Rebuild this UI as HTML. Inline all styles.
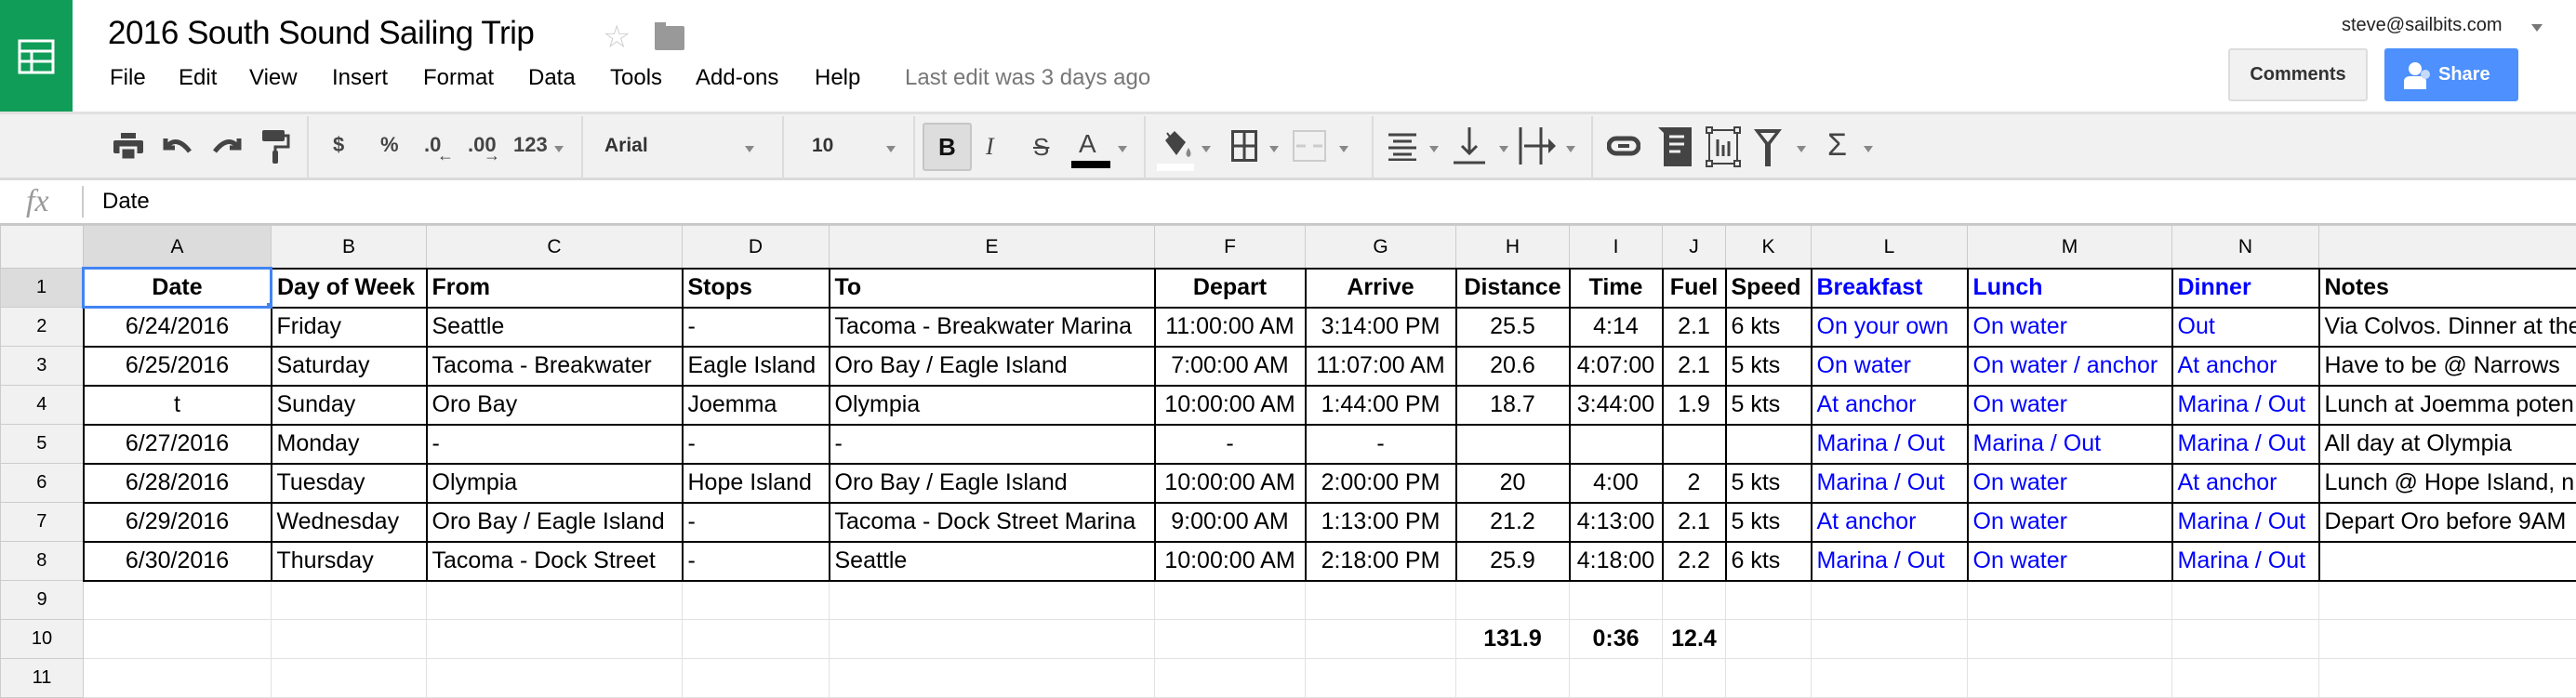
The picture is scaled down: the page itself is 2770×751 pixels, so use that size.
<!DOCTYPE html>
<html><head><meta charset="utf-8"><style>
*{margin:0;padding:0;box-sizing:border-box}
body{width:2770px;height:750px;overflow:hidden;background:#fff;font-family:"Liberation Sans",Arial,sans-serif;position:relative}
.a{position:absolute;white-space:nowrap}
.menu span{position:absolute;top:70px;font-size:24px;color:#000}
.tb{position:absolute;left:0;top:120px;width:2770px;height:74px;background:#f1f1f1;border-top:3px solid #e0e0e0;border-bottom:3px solid #dadada}
.sep{position:absolute;top:2px;width:2px;height:68px;background:#dcdcdc}
.ic{position:absolute;color:#444;font-weight:bold;font-size:22px}
.dd{position:absolute;top:34px;width:0;height:0;border-left:5px solid transparent;border-right:5px solid transparent;border-top:7px solid #888}
table{position:absolute;left:0;top:242px;border-collapse:collapse;table-layout:fixed;font-size:25px;width:2776px}
td{height:42px;padding:0 5px;overflow:hidden;white-space:nowrap;border:1px solid #e2e2e2;vertical-align:middle;line-height:25px}
tr.h td{height:46px;background:#f1f1f1;border:1px solid #ccc;text-align:center;font-size:21px}
td.rh{background:#f1f1f1;border:1px solid #ccc;text-align:center;font-size:20px;padding:0}
.k td:not(.rh){border:2px solid #000}
.b{font-weight:bold}.c{text-align:center}.u{color:#0000ff}
</style></head><body>
<div class="a" style="left:0;top:0;width:78px;height:120px;background:#0f9d58"></div>
<svg class="a" style="left:19px;top:42px" width="40" height="38" viewBox="0 0 40 38"><rect x="2" y="2" width="36" height="34" fill="none" stroke="#fff" stroke-width="3"/><line x1="2" y1="13" x2="38" y2="13" stroke="#fff" stroke-width="3"/><line x1="2" y1="24" x2="38" y2="24" stroke="#fff" stroke-width="3"/><line x1="15" y1="13" x2="15" y2="36" stroke="#fff" stroke-width="3"/></svg>
<div class="a" style="left:116px;top:16px;font-size:35px;color:#000;letter-spacing:-0.5px">2016 South Sound Sailing Trip</div>
<div class="a" style="left:648px;top:20px;font-size:34px;color:#ccc">☆</div>
<div class="a" style="left:704px;top:28px;width:32px;height:26px;background:#999;border-radius:2px"></div>
<div class="a" style="left:704px;top:24px;width:12px;height:6px;background:#999"></div>
<div class="menu"><span style="left:118px">File</span><span style="left:192px">Edit</span><span style="left:268px">View</span><span style="left:357px">Insert</span><span style="left:455px">Format</span><span style="left:568px">Data</span><span style="left:656px">Tools</span><span style="left:748px">Add-ons</span><span style="left:876px">Help</span><span style="left:973px;color:#777">Last edit was 3 days ago</span></div>
<div class="a" style="left:2518px;top:16px;font-size:20px;color:#222">steve@sailbits.com</div>
<div class="a" style="left:2722px;top:26px;border-left:6px solid transparent;border-right:6px solid transparent;border-top:8px solid #777"></div>
<div class="a" style="left:2396px;top:52px;width:150px;height:57px;background:#f1f1f1;border:2px solid #ddd;border-radius:3px;font-size:20px;font-weight:bold;color:#333;text-align:center;line-height:53px">Comments</div>
<div class="a" style="left:2564px;top:52px;width:144px;height:57px;background:#4d90fe;border-radius:3px;font-size:20px;font-weight:bold;color:#fff;line-height:57px;padding-left:58px">Share</div>
<svg class="a" style="left:2584px;top:66px" width="34" height="30"><circle cx="13" cy="8" r="7" fill="#fff"/><path d="M1 30 V22 Q1 16 8 16 H18 Q25 16 25 22 V30Z" fill="#fff"/><circle cx="24" cy="14" r="5" fill="#c6dafc"/></svg>

<div class="tb">
<div class="sep" style="left:330px"></div><div class="sep" style="left:625px"></div><div class="sep" style="left:841px"></div><div class="sep" style="left:982px"></div><div class="sep" style="left:1230px"></div><div class="sep" style="left:1475px"></div><div class="sep" style="left:1711px"></div>
<svg class="a" style="left:122px;top:20px" width="32" height="30"><rect x="8" y="0" width="16" height="6" fill="#444"/><rect x="0" y="8" width="32" height="14" rx="2" fill="#444"/><rect x="8" y="16" width="16" height="13" fill="#444" stroke="#f1f1f1" stroke-width="3"/></svg>
<svg class="a" style="left:174px;top:22px" width="34" height="24"><path d="M4 4 V14 H14 M5 13 Q16 0 30 18" fill="none" stroke="#444" stroke-width="5"/></svg>
<svg class="a" style="left:227px;top:22px" width="34" height="24"><path d="M30 4 V14 H20 M29 13 Q18 0 4 18" fill="none" stroke="#444" stroke-width="5"/></svg>
<svg class="a" style="left:282px;top:17px" width="30" height="36"><rect x="0" y="0" width="24" height="12" rx="2" fill="#444"/><path d="M24 6 H28 V18 H14 V24" fill="none" stroke="#444" stroke-width="3"/><rect x="11" y="22" width="6" height="14" rx="2" fill="#444"/></svg>
<div class="ic" style="left:358px;top:20px">$</div>
<div class="ic" style="left:409px;top:20px">%</div>
<div class="ic" style="left:456px;top:20px">.0</div><div class="ic" style="left:470px;top:34px;font-size:18px">←</div>
<div class="ic" style="left:503px;top:20px">.00</div><div class="ic" style="left:520px;top:34px;font-size:18px">→</div>
<div class="ic" style="left:552px;top:20px">123</div><div class="dd" style="left:596px"></div>
<div class="ic" style="left:650px;top:22px;font-size:21px;color:#333">Arial</div><div class="dd" style="left:801px"></div>
<div class="ic" style="left:873px;top:22px;font-size:21px;color:#333">10</div><div class="dd" style="left:953px"></div>
<div class="a" style="left:992px;top:9px;width:53px;height:52px;background:#ddd;border:2px solid #c6c6c6;border-radius:3px"></div>
<div class="ic" style="left:1009px;top:20px;font-size:26px;color:#111">B</div>
<div class="ic" style="left:1060px;top:20px;font-size:26px;font-style:italic;font-family:'Liberation Serif',serif;font-weight:normal">I</div>
<div class="ic" style="left:1111px;top:20px;font-size:26px;text-decoration:line-through;font-weight:normal">S</div>
<div class="ic" style="left:1160px;top:16px;font-size:28px;font-weight:normal">A</div><div class="a" style="left:1152px;top:50px;width:42px;height:8px;background:#000"></div><div class="dd" style="left:1202px"></div>
<svg class="a" style="left:1245px;top:14px" width="40" height="42"><path d="M8 14 L18 4 L30 16 L20 30 Z" fill="#444"/><path d="M10 6 L20 20" stroke="#444" stroke-width="2"/><path d="M33 22 Q38 30 33 32 Q28 30 33 22" fill="#888"/></svg>
<div class="a" style="left:1244px;top:53px;width:40px;height:8px;background:#fff"></div><div class="dd" style="left:1292px"></div>
<svg class="a" style="left:1324px;top:17px" width="28" height="34"><rect x="1.5" y="1.5" width="25" height="31" fill="none" stroke="#444" stroke-width="3"/><line x1="14" y1="0" x2="14" y2="34" stroke="#444" stroke-width="3"/><line x1="0" y1="17" x2="28" y2="17" stroke="#444" stroke-width="3"/></svg><div class="dd" style="left:1365px"></div>
<svg class="a" style="left:1390px;top:17px" width="36" height="34"><rect x="1" y="1" width="34" height="32" fill="none" stroke="#ccc" stroke-width="2"/><path d="M4 17 H14 M32 17 H22" stroke="#ccc" stroke-width="3"/></svg><div class="dd" style="left:1440px"></div>
<svg class="a" style="left:1493px;top:20px" width="30" height="30"><path d="M0 2 H30 M5 9 H25 M0 16 H30 M5 23 H25 M0 29 H30" stroke="#444" stroke-width="3"/></svg><div class="dd" style="left:1537px"></div>
<svg class="a" style="left:1563px;top:14px" width="34" height="40"><path d="M17 0 V28 M9 20 L17 28 L25 20 M0 38 H34" fill="none" stroke="#444" stroke-width="3"/></svg><div class="dd" style="left:1612px"></div>
<svg class="a" style="left:1633px;top:14px" width="42" height="40"><path d="M2 0 V40 M24 0 V40 M6 20 H36" stroke="#444" stroke-width="3"/><path d="M32 12 L40 20 L32 28Z" fill="#444"/></svg><div class="dd" style="left:1684px"></div>
<svg class="a" style="left:1728px;top:23px" width="36" height="22"><rect x="2" y="3" width="32" height="16" rx="8" fill="none" stroke="#444" stroke-width="5"/><line x1="12" y1="11" x2="24" y2="11" stroke="#444" stroke-width="4"/></svg>
<svg class="a" style="left:1783px;top:14px" width="36" height="42"><path d="M0 0 H36 V42 H6 V6Z" fill="#444"/><path d="M12 10 H28 M12 18 H28 M12 26 H24" stroke="#f1f1f1" stroke-width="3"/></svg>
<svg class="a" style="left:1834px;top:13px" width="38" height="44"><rect x="4" y="4" width="30" height="36" fill="none" stroke="#444" stroke-width="2"/><rect x="1" y="1" width="6" height="6" fill="#f1f1f1" stroke="#444" stroke-width="2"/><rect x="31" y="1" width="6" height="6" fill="#f1f1f1" stroke="#444" stroke-width="2"/><rect x="1" y="37" width="6" height="6" fill="#f1f1f1" stroke="#444" stroke-width="2"/><rect x="31" y="37" width="6" height="6" fill="#f1f1f1" stroke="#444" stroke-width="2"/><path d="M13 14 V32 M19 20 V32 M25 16 V32" stroke="#444" stroke-width="3"/></svg>
<svg class="a" style="left:1886px;top:16px" width="30" height="40"><path d="M0 0 H30 L18 16 V40 H12 V16Z" fill="#444"/><path d="M7 4 H23 L15 14Z" fill="#f1f1f1"/></svg><div class="dd" style="left:1932px"></div>
<div class="ic" style="left:1965px;top:14px;font-size:34px;font-weight:normal">Σ</div><div class="dd" style="left:2004px"></div>
</div>
<div class="a" style="left:28px;top:198px;font-size:34px;font-style:italic;color:#999;font-family:'Liberation Serif',serif">fx</div>
<div class="a" style="left:88px;top:200px;width:2px;height:34px;background:#ccc"></div>
<div class="a" style="left:110px;top:203px;font-size:24px">Date</div>
<div class="a" style="left:0;top:240px;width:2770px;height:2px;background:#c8c8c8"></div>
<div class="a" style="left:0;top:242px;width:89px;height:46px;background:#c8c8c8"></div>

<table>
<colgroup><col style="width:89px"><col style="width:202px"><col style="width:167px"><col style="width:275px"><col style="width:158px"><col style="width:350px"><col style="width:162px"><col style="width:162px"><col style="width:122px"><col style="width:100px"><col style="width:68px"><col style="width:92px"><col style="width:168px"><col style="width:220px"><col style="width:158px"><col style="width:283px"></colgroup>
<tr class="h"><td style="background:#f1f1f1;border-color:#c8c8c8"><div style="width:80px;height:35px;background:#f1f1f1"></div></td><td style="background:#dcdcdc">A</td><td>B</td><td>C</td><td>D</td><td>E</td><td>F</td><td>G</td><td>H</td><td>I</td><td>J</td><td>K</td><td>L</td><td>M</td><td>N</td><td></td></tr>
<tr class="k b"><td class="rh" style="background:#dcdcdc;font-weight:normal">1</td><td class="c" style="border:3px solid #4285f4;position:relative">Date<div style="position:absolute;right:-6px;bottom:-6px;width:9px;height:9px;background:#4285f4"></div></td><td>Day of Week</td><td>From</td><td>Stops</td><td>To</td><td class="c">Depart</td><td class="c">Arrive</td><td class="c">Distance</td><td class="c">Time</td><td class="c">Fuel</td><td>Speed</td><td class="u">Breakfast</td><td class="u">Lunch</td><td class="u">Dinner</td><td>Notes</td></tr>
<tr class="k"><td class="rh">2</td><td class="c">6/24/2016</td><td>Friday</td><td>Seattle</td><td>-</td><td>Tacoma - Breakwater Marina</td><td class="c">11:00:00 AM</td><td class="c">3:14:00 PM</td><td class="c">25.5</td><td class="c">4:14</td><td class="c">2.1</td><td>6 kts</td><td class="u">On your own</td><td class="u">On water</td><td class="u">Out</td><td>Via Colvos. Dinner at the</td></tr>
<tr class="k"><td class="rh">3</td><td class="c">6/25/2016</td><td>Saturday</td><td>Tacoma - Breakwater</td><td>Eagle Island</td><td>Oro Bay / Eagle Island</td><td class="c">7:00:00 AM</td><td class="c">11:07:00 AM</td><td class="c">20.6</td><td class="c">4:07:00</td><td class="c">2.1</td><td>5 kts</td><td class="u">On water</td><td class="u">On water / anchor</td><td class="u">At anchor</td><td>Have to be @ Narrows</td></tr>
<tr class="k"><td class="rh">4</td><td class="c">t</td><td>Sunday</td><td>Oro Bay</td><td>Joemma</td><td>Olympia</td><td class="c">10:00:00 AM</td><td class="c">1:44:00 PM</td><td class="c">18.7</td><td class="c">3:44:00</td><td class="c">1.9</td><td>5 kts</td><td class="u">At anchor</td><td class="u">On water</td><td class="u">Marina / Out</td><td>Lunch at Joemma poten</td></tr>
<tr class="k"><td class="rh">5</td><td class="c">6/27/2016</td><td>Monday</td><td>-</td><td>-</td><td>-</td><td class="c">-</td><td class="c">-</td><td></td><td></td><td></td><td></td><td class="u">Marina / Out</td><td class="u">Marina / Out</td><td class="u">Marina / Out</td><td>All day at Olympia</td></tr>
<tr class="k"><td class="rh">6</td><td class="c">6/28/2016</td><td>Tuesday</td><td>Olympia</td><td>Hope Island</td><td>Oro Bay / Eagle Island</td><td class="c">10:00:00 AM</td><td class="c">2:00:00 PM</td><td class="c">20</td><td class="c">4:00</td><td class="c">2</td><td>5 kts</td><td class="u">Marina / Out</td><td class="u">On water</td><td class="u">At anchor</td><td>Lunch @ Hope Island, n</td></tr>
<tr class="k"><td class="rh">7</td><td class="c">6/29/2016</td><td>Wednesday</td><td>Oro Bay / Eagle Island</td><td>-</td><td>Tacoma - Dock Street Marina</td><td class="c">9:00:00 AM</td><td class="c">1:13:00 PM</td><td class="c">21.2</td><td class="c">4:13:00</td><td class="c">2.1</td><td>5 kts</td><td class="u">At anchor</td><td class="u">On water</td><td class="u">Marina / Out</td><td>Depart Oro before 9AM</td></tr>
<tr class="k"><td class="rh">8</td><td class="c">6/30/2016</td><td>Thursday</td><td>Tacoma - Dock Street</td><td>-</td><td>Seattle</td><td class="c">10:00:00 AM</td><td class="c">2:18:00 PM</td><td class="c">25.9</td><td class="c">4:18:00</td><td class="c">2.2</td><td>6 kts</td><td class="u">Marina / Out</td><td class="u">On water</td><td class="u">Marina / Out</td><td></td></tr>
<tr><td class="rh">9</td><td></td><td></td><td></td><td></td><td></td><td></td><td></td><td></td><td></td><td></td><td></td><td></td><td></td><td></td><td></td></tr>
<tr class="b"><td class="rh" style="font-weight:normal">10</td><td></td><td></td><td></td><td></td><td></td><td></td><td></td><td class="c">131.9</td><td class="c">0:36</td><td class="c">12.4</td><td></td><td></td><td></td><td></td><td></td></tr>
<tr><td class="rh">11</td><td></td><td></td><td></td><td></td><td></td><td></td><td></td><td></td><td></td><td></td><td></td><td></td><td></td><td></td><td></td></tr>
</table>
</body></html>
